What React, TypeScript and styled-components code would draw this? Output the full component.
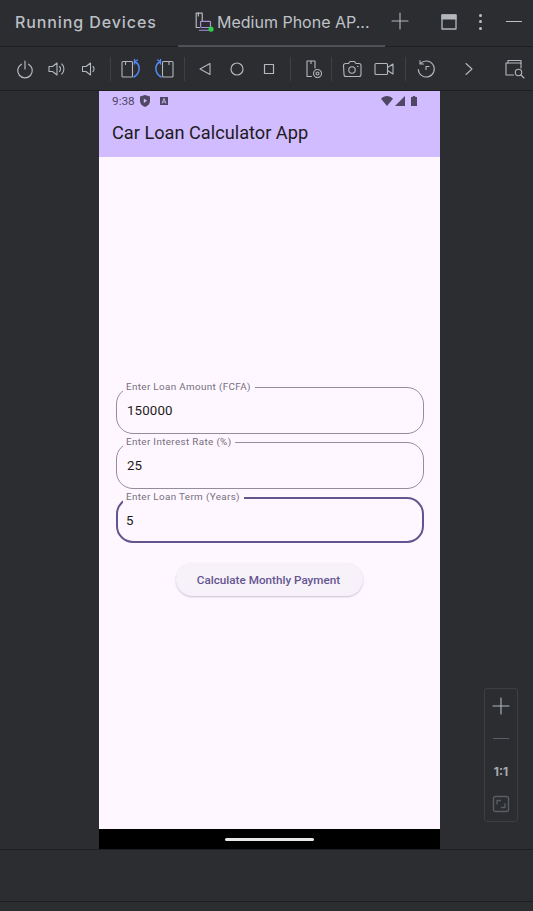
import { ReactNode } from "react";
import styled, { createGlobalStyle } from "styled-components";

const GlobalStyle = createGlobalStyle`
  html, body {
    margin: 0;
    padding: 0;
    background: #2b2d30;
  }
  * {
    box-sizing: border-box;
  }
`;

const ICON = "#b4b7bd";
const BLUE = "#548af7";

function Icon({ children, size = 20, view = 20 }: { children: ReactNode; size?: number; view?: number }) {
  return (
    <svg width={size} height={size} viewBox={`0 0 ${view} ${view}`} fill="none" stroke={ICON} strokeWidth="1.1" strokeLinecap="round" strokeLinejoin="round">
      {children}
    </svg>
  );
}

export default function App() {
  return (
    <Page>
      <GlobalStyle />
      <TabBar>
        <PanelTitle>Running Devices</PanelTitle>
        <Tab>
          <Icon size={22} view={20}>
            <path d="M7.5 9V2h-5.500v13h3" />
            <path d="M4 2v2.500" />
            <rect x="6" y="9.500" width="9" height="5.500" rx="0.800" stroke="#a88fd8" />
            <path d="M5 17.500h10" stroke="#a88fd8" />
            <circle cx="15.500" cy="16.500" r="2.300" fill="#2fd14a" stroke="none" />
          </Icon>
          <TabLabel>Medium Phone AP...</TabLabel>
        </Tab>
        <AddTab>
          <Icon size={20}>
            <path d="M10 2v16M2 10h16" />
          </Icon>
        </AddTab>
        <LayoutTool>
          <Icon size={18} view={18}>
            <rect x="2" y="2" width="14" height="14" strokeWidth="1.300" />
            <rect x="2" y="2" width="14" height="4" fill={ICON} />
          </Icon>
        </LayoutTool>
        <MoreTool>
          <Dot />
          <Dot />
          <Dot />
        </MoreTool>
        <HideTool />
      </TabBar>

      <Toolbar>
        <ToolButton>
          <Icon>
            <path d="M6.500 5.200a7.300 7.300 0 1 0 7 0" strokeWidth="1.200" />
            <path d="M10 2v8" strokeWidth="1.200" />
          </Icon>
        </ToolButton>
        <ToolButton>
          <Icon>
            <path d="M2 7.500h3.500L10 4v12l-4.500-3.500H2z" />
            <path d="M12.500 7.500a3.500 3.500 0 0 1 0 5M14.800 5a7 7 0 0 1 0 10" />
          </Icon>
        </ToolButton>
        <ToolButton>
          <Icon>
            <path d="M3.500 7.500H7L11.500 4v12L7 12.500H3.500z" />
            <path d="M14 7.500a3.500 3.500 0 0 1 0 5" />
          </Icon>
        </ToolButton>
        <Divider $before={5} $after={3} />
        <ToolButton>
          <Icon size={22} view={22}>
            <rect x="3" y="3.500" width="10.500" height="15.500" rx="1" />
            <path d="M6.500 3.500v3" />
            <path d="M15.500 3.800c6 2 6.500 11 -.5 15.200" stroke={BLUE} strokeWidth="1.500" />
            <path d="M15.500 1.500v4.500h-0" stroke={BLUE} strokeWidth="1.300" />
            <path d="M15.500 3.800l3-1.800" stroke={BLUE} strokeWidth="1.300" />
          </Icon>
        </ToolButton>
        <RotateRight>
          <Icon size={22} view={22}>
            <rect x="8.500" y="3.500" width="10.500" height="15.500" rx="1" />
            <path d="M15 3.500v3" />
            <path d="M6.500 3.800c-6 2-6.500 11 .5 15.200" stroke={BLUE} strokeWidth="1.500" />
            <path d="M6.500 1.500v4.500" stroke={BLUE} strokeWidth="1.300" />
            <path d="M6.500 3.800l-3-1.800" stroke={BLUE} strokeWidth="1.300" />
          </Icon>
        </RotateRight>
        <Divider $before={3} $after={4} />
        <ToolButton>
          <Icon>
            <path d="M15 4.500v11L5 10z" />
          </Icon>
        </ToolButton>
        <ToolButton>
          <Icon>
            <circle cx="10" cy="10" r="6" strokeWidth="1.200" />
          </Icon>
        </ToolButton>
        <ToolButton>
          <Icon>
            <rect x="5.500" y="5.500" width="9" height="9" strokeWidth="1.200" />
          </Icon>
        </ToolButton>
        <Divider $before={5} $after={6} />
        <ToolButton>
          <Icon size={22} view={22}>
            <path d="M9.500 18.500H5V3h8v7" />
            <path d="M9 3v2.500" />
            <circle cx="15.500" cy="15.500" r="1.500" />
            <circle cx="15.500" cy="15.500" r="4" strokeDasharray="2 1.100" />
          </Icon>
        </ToolButton>
        <Divider $before={2} $after={4} />
        <ToolButton>
          <Icon size={22} view={22}>
            <path d="M2.500 7.500a2 2 0 0 1 2-2h3l1.500-2h4.500l1.500 2h3a2 2 0 0 1 2 2v9a2 2 0 0 1-2 2h-13a2 2 0 0 1-2-2z" />
            <circle cx="11" cy="12" r="3.200" />
            <path d="M16.500 8.500h.5" />
          </Icon>
        </ToolButton>
        <ToolButton>
          <Icon size={22} view={22}>
            <rect x="2" y="5.500" width="12.500" height="11" rx="1" />
            <path d="M14.500 9.500l5.500-3.500v10l-5.500-3.500" />
          </Icon>
        </ToolButton>
        <Divider $before={5} $after={4} />
        <ToolButton>
          <Icon size={22} view={22}>
            <path d="M5.500 5.500a8 8 0 1 1-2.200 6" />
            <path d="M5 2.500v3.500h3.500" />
            <path d="M11 11.500V8.500M11 8.500h3" />
          </Icon>
        </ToolButton>
        <Chevron>
          <Icon>
            <path d="M7 4.500l6 5.500-6 5.500" />
          </Icon>
        </Chevron>
        <SearchTool>
          <Icon size={22} view={22}>
            <path d="M4 5V2.500h13V5" />
            <path d="M9.500 17H2V5h15v5" />
            <circle cx="14.500" cy="14.500" r="3.200" />
            <path d="M17 17l3 3" />
          </Icon>
        </SearchTool>
      </Toolbar>

      <Main>
        <Phone>
          <AppHeader>
            <StatusBar>
              <Clock>9:38</Clock>
              <svg width="10" height="12" viewBox="0 0 10 12">
                <path d="M5 0l5 1.500v4.500c0 3-2.200 5-5 6-2.800-1-5-3-5-6V1.500z" fill="#4f4763" />
                <path d="M3.800 3.500v4.600L7 5.800z" fill="#d0bcff" />
              </svg>
              <StatusBadge>
                <svg width="8" height="8" viewBox="0 0 8 8">
                  <rect width="8" height="8" fill="#4f4763" />
                  <path d="M2 6.500L4 1.500l2 5M2.800 5h2.400" stroke="#d0bcff" strokeWidth="0.900" fill="none" />
                </svg>
              </StatusBadge>
              <StatusRight>
                <svg width="12" height="10" viewBox="0 0 12 10">
                  <path d="M0 2.800C3.400-.8 8.600-.8 12 2.800L6 10z" fill="#4f4763" />
                </svg>
                <svg width="10" height="10" viewBox="0 0 10 10">
                  <path d="M10 0v10H0z" fill="#4f4763" />
                </svg>
                <svg width="6" height="10" viewBox="0 0 6 10">
                  <path d="M1.800 0h2.400v1H6v9H0V1h1.800z" fill="#4f4763" />
                </svg>
              </StatusRight>
            </StatusBar>
            <AppTitle>Car Loan Calculator App</AppTitle>
          </AppHeader>

          <Content>
            <Field label="Enter Loan Amount (FCFA)" value="150000" />
            <Field label="Enter Interest Rate (%)" value="25" />
            <Field label="Enter Loan Term (Years)" value="5" focused />
            <CalcButton>Calculate Monthly Payment</CalcButton>
          </Content>

          <NavBar>
            <HomeHandle />
          </NavBar>
        </Phone>

        <ZoomPanel>
          <ZoomItem>
            <Icon>
              <path d="M10 2v16M2 10h16" />
            </Icon>
          </ZoomItem>
          <ZoomItem>
            <ZoomMinus />
          </ZoomItem>
          <ZoomItem>
            <ZoomRatio>1:1</ZoomRatio>
          </ZoomItem>
          <ZoomItem>
            <Icon size={18} view={18}>
              <g stroke="#5a5d63" strokeWidth="1.400">
                <rect x="1.500" y="1.500" width="15" height="15" rx="2" />
                <path d="M5 9V5.500h3.500M13 9v3.500H9.500" />
              </g>
            </Icon>
          </ZoomItem>
        </ZoomPanel>
      </Main>

      <BottomStrip />
      <StatusStrip />
    </Page>
  );
}

function Field({ label, value, focused = false }: { label: string; value: string; focused?: boolean }) {
  return (
    <FieldBox $focused={focused}>
      <FieldLabel $focused={focused}>{label}</FieldLabel>
      <FieldInput value={value} readOnly />
    </FieldBox>
  );
}

const Page = styled.div`
  width: 533px;
  height: 911px;
  overflow: hidden;
  display: flex;
  flex-direction: column;
  background: #2b2d30;
  font-family: Inter, "Noto Sans", sans-serif;
`;

const TabBar = styled.div`
  height: 47px;
  flex: none;
  display: flex;
  align-items: center;
  padding-left: 15px;
  border-bottom: 1px solid #1e1f22;
`;

const PanelTitle = styled.div`
  width: 163px;
  margin-top: -2px;
  font-size: 16px;
  font-weight: 500;
  letter-spacing: 0.9px;
  color: #bcbfc5;
  white-space: nowrap;
`;

const Tab = styled.div`
  width: 207px;
  height: 47px;
  display: flex;
  align-items: center;
  gap: 1px;
  padding: 0 0 2px 16px;
  border-bottom: 2px solid #4e5157;
  margin-bottom: -1px;
`;

const TabLabel = styled.span`
  font-size: 16px;
  color: #bfc2c8;
  white-space: nowrap;
`;

const AddTab = styled.div`
  display: flex;
  margin: -4px 0 0 5px;
`;

const LayoutTool = styled.div`
  display: flex;
  margin: -2px 0 0 30px;
`;

const MoreTool = styled.div`
  display: flex;
  flex-direction: column;
  gap: 3.500px;
  margin: -3px 0 0 21px;
`;

const Dot = styled.span`
  width: 3px;
  height: 3px;
  border-radius: 50%;
  background: #bcbfc5;
`;

const HideTool = styled.div`
  width: 16px;
  height: 1px;
  margin: -4px 0 0 24px;
  background: #bcbfc5;
`;

const Toolbar = styled.div`
  height: 44px;
  flex: none;
  display: flex;
  align-items: center;
  padding-left: 9px;
  border-bottom: 1px solid #1e1f22;
`;

const ToolButton = styled.div`
  width: 32px;
  height: 32px;
  flex: none;
  display: flex;
  align-items: center;
  justify-content: center;
`;

const RotateRight = styled(ToolButton)`
  margin-left: 3px;
`;

const Chevron = styled(ToolButton)`
  margin-left: 11px;
`;

const SearchTool = styled(ToolButton)`
  margin-left: 14px;
`;

const Divider = styled.div<{ $before: number; $after: number }>`
  width: 1px;
  height: 24px;
  flex: none;
  margin: 0 ${(p) => p.$after}px 0 ${(p) => p.$before}px;
  background: #3e4045;
`;

const Main = styled.div`
  height: 758px;
  flex: none;
  display: flex;
  padding-left: 99px;
`;

const Phone = styled.div`
  width: 341px;
  height: 758px;
  flex: none;
  display: flex;
  flex-direction: column;
  background: #fef7ff;
  font-family: Roboto, sans-serif;
`;

const AppHeader = styled.div`
  height: 66px;
  flex: none;
  background: #d0bcff;
`;

const StatusBar = styled.div`
  height: 20px;
  display: flex;
  align-items: center;
  padding: 0 23px 0 13px;
`;

const Clock = styled.span`
  width: 28px;
  font-size: 11.800px;
  color: #4f4763;
`;

const StatusBadge = styled.span`
  display: flex;
  margin-left: 10px;
`;

const StatusRight = styled.div`
  display: flex;
  align-items: center;
  gap: 2px;
  margin-left: auto;

  svg:last-child {
    margin-left: 4px;
  }
`;

const AppTitle = styled.div`
  margin: 10px 0 0 13px;
  font-size: 18.200px;
  line-height: 24px;
  color: #1d1b20;
`;

const Content = styled.div`
  flex: 1;
  display: flex;
  flex-direction: column;
  align-items: flex-start;
  gap: 8px;
  padding: 230px 16px 0 17px;
`;

const FieldBox = styled.div<{ $focused: boolean }>`
  position: relative;
  width: 308px;
  height: ${(p) => (p.$focused ? 46 : 47)}px;
  flex: none;
  border-radius: 17px;
  border: ${(p) => (p.$focused ? "2px solid #65558f" : "1px solid #938e9b")};
  display: flex;
  align-items: center;
  padding-left: ${(p) => (p.$focused ? 8 : 10)}px;
`;

const FieldLabel = styled.label<{ $focused: boolean }>`
  position: absolute;
  left: ${(p) => (p.$focused ? 5 : 6)}px;
  top: ${(p) => (p.$focused ? -8 : -7)}px;
  padding: 0 4px 0 3px;
  font-size: 9.900px;
  line-height: 12px;
  letter-spacing: 0.340px;
  color: #756f7d;
  background: #fef7ff;
  white-space: nowrap;
`;

const FieldInput = styled.input`
  width: 100%;
  border: none;
  outline: none;
  padding: 0;
  background: transparent;
  font-family: Roboto, sans-serif;
  font-size: 13.300px;
  letter-spacing: 0.150px;
  color: #1d1b20;
`;

const CalcButton = styled.button`
  width: 187px;
  height: 33px;
  flex: none;
  margin: 12px 0 0 60px;
  padding: 0 2px 0 0;
  border: none;
  border-radius: 17px;
  background: #f7f2fa;
  box-shadow: 0 1px 2px rgba(60, 50, 80, 0.28);
  font-family: Roboto, sans-serif;
  font-size: 11.700px;
  font-weight: 500;
  color: #65558f;
`;

const NavBar = styled.div`
  height: 20px;
  flex: none;
  display: flex;
  justify-content: center;
  padding-top: 9px;
  background: #000;
`;

const HomeHandle = styled.div`
  width: 89px;
  height: 3px;
  border-radius: 2px;
  background: #e8e8e8;
`;

const ZoomPanel = styled.div`
  width: 34px;
  height: 134px;
  flex: none;
  margin: 597px 0 0 44px;
  padding: 1px 0;
  display: flex;
  flex-direction: column;
  border: 1px solid #3c3e42;
  border-radius: 3px;
`;

const ZoomItem = styled.div`
  height: 33px;
  display: flex;
  align-items: center;
  justify-content: center;
`;

const ZoomMinus = styled.div`
  width: 16px;
  height: 1px;
  background: #5a5d63;
`;

const ZoomRatio = styled.span`
  font-size: 12px;
  font-weight: 700;
  color: #a8abb1;
`;

const BottomStrip = styled.div`
  height: 52px;
  flex: none;
  border-top: 1px solid #1e1f22;
`;

const StatusStrip = styled.div`
  flex: 1;
  border-top: 1px solid #1e1f22;
`;
